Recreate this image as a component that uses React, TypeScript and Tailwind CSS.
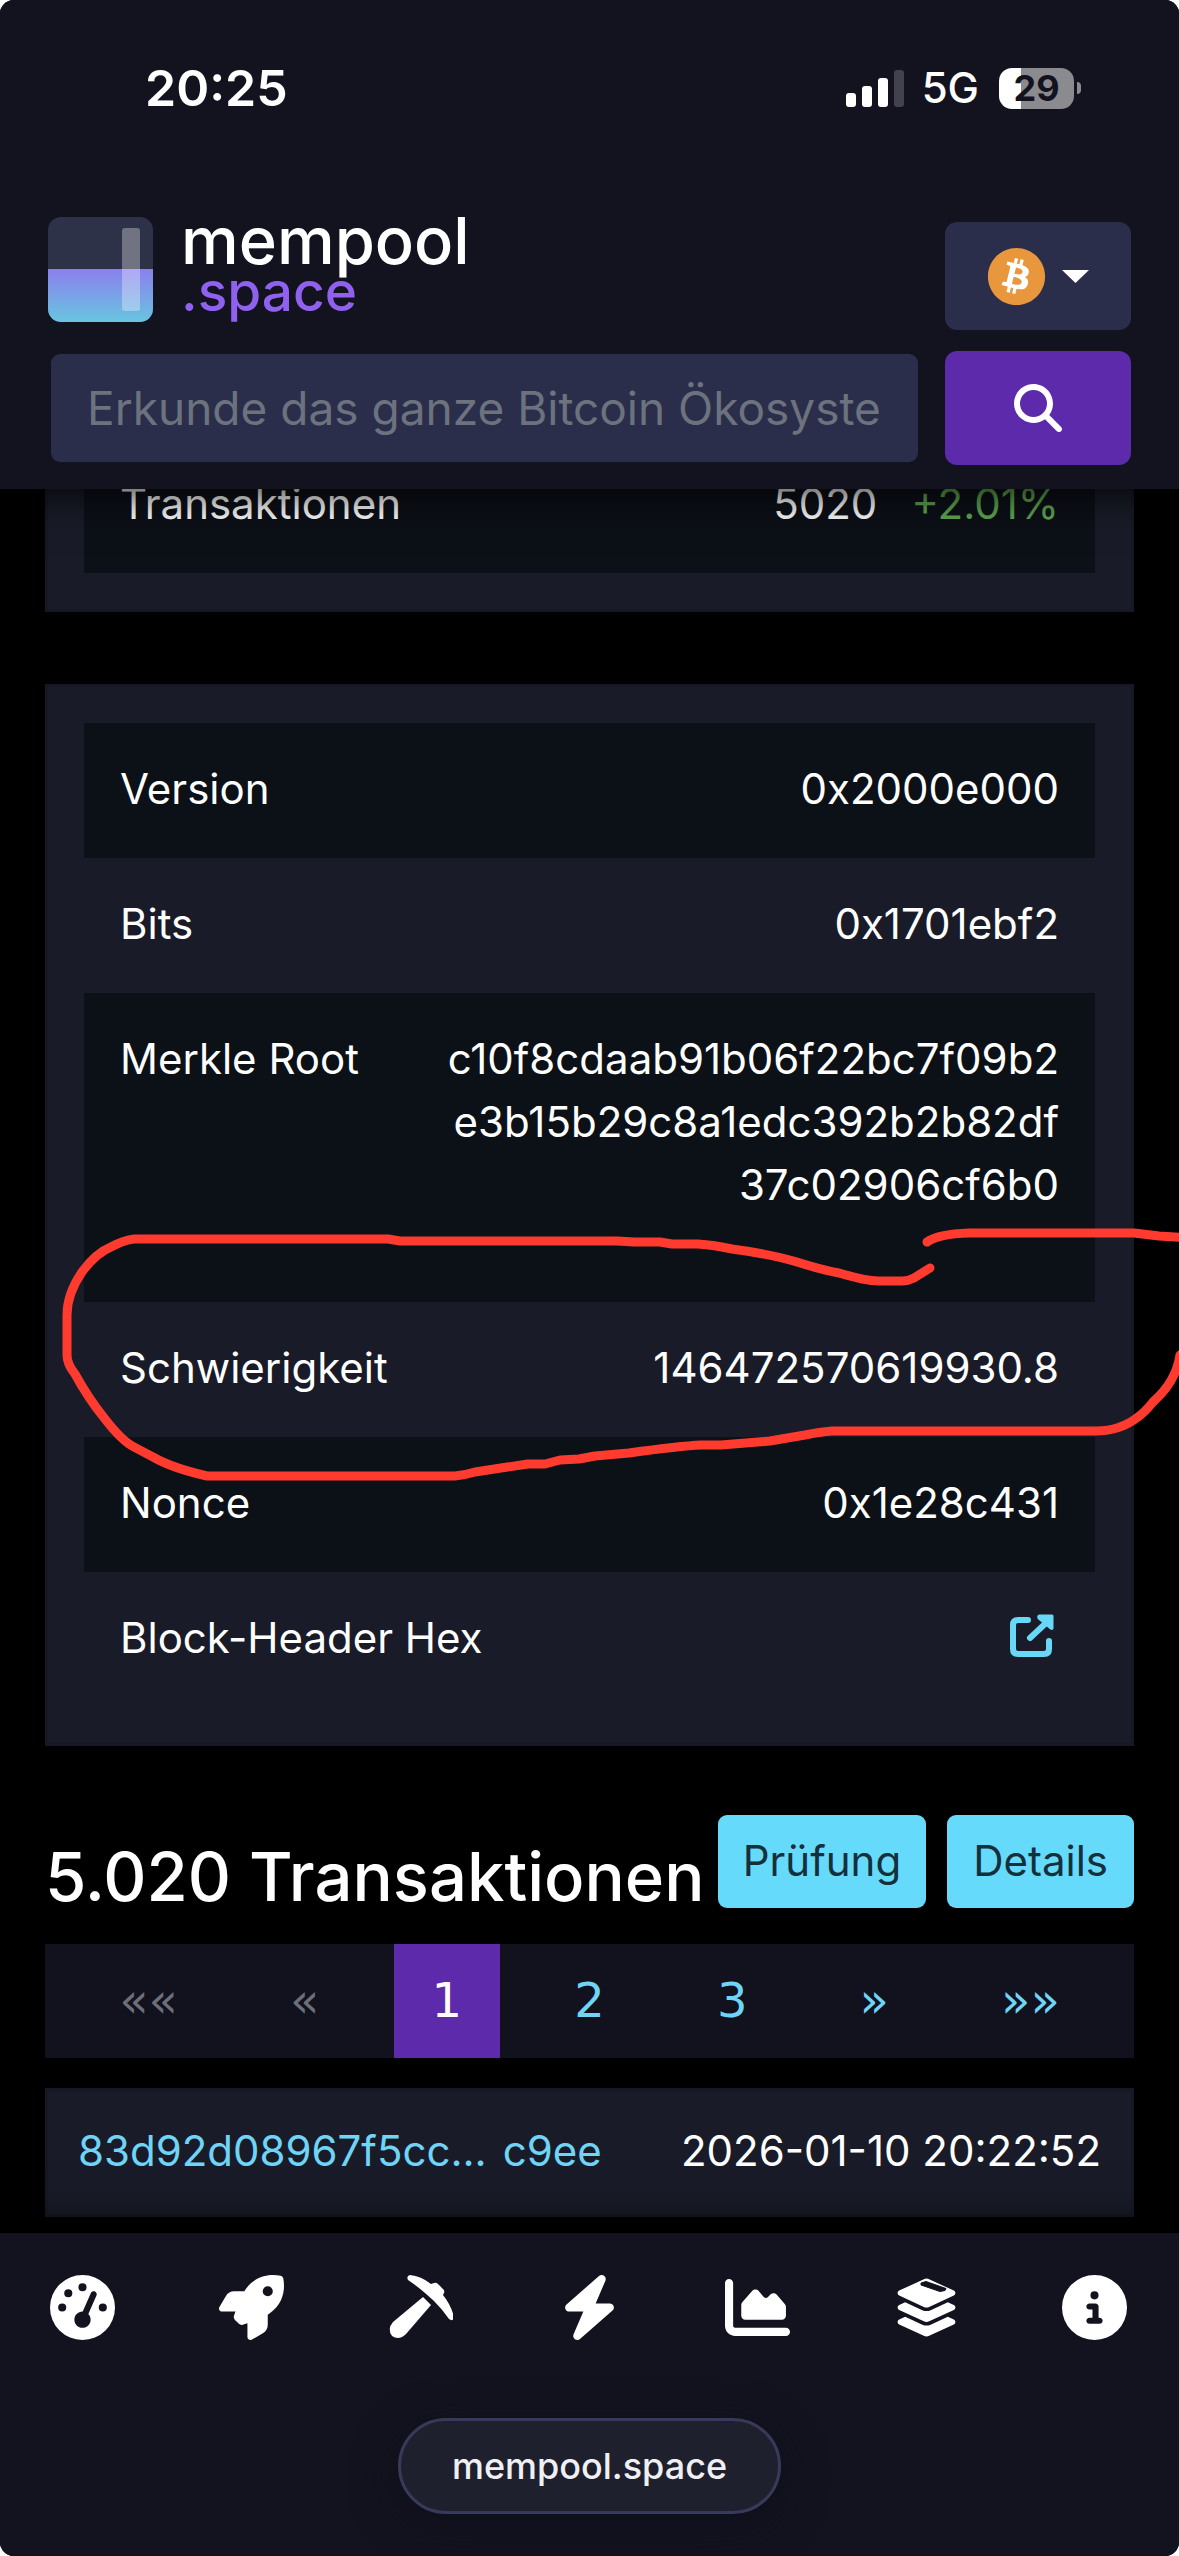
import type { ReactNode } from "react";
import {
  FaBitcoin,
  FaBolt,
  FaChartArea,
  FaCircleInfo,
  FaGaugeHigh,
  FaLayerGroup,
  FaMagnifyingGlass,
  FaRocket,
} from "react-icons/fa6";

function StatusBar() {
  return (
    <div className="flex h-[176px] items-center justify-between pr-[98px] pl-[145px]">
      <span className="text-[50px] leading-none font-semibold">20:25</span>
      <div className="flex items-center">
        <div className="flex h-[37px] items-end gap-1.5" aria-label="Signal">
          <span className="h-3.5 w-2.5 rounded-[3px] bg-white" />
          <span className="h-[21px] w-2.5 rounded-[3px] bg-white" />
          <span className="h-[29px] w-2.5 rounded-[3px] bg-white" />
          <span className="h-[37px] w-2.5 rounded-[3px] bg-[#42424c]" />
        </div>
        <span className="ml-[18px] text-[42px] leading-none font-medium">5G</span>
        <div className="ml-5 flex items-center gap-[3px]">
          <div className="flex h-[41px] w-[75px] items-center justify-center rounded-[13px] bg-linear-to-r from-white from-[29%] to-[#8a8a8f] to-[29%] text-[36px] leading-none font-bold text-[#12131e]">
            29
          </div>
          <span className="h-3 w-1 rounded-r-full bg-[#8a8a8f]" />
        </div>
      </div>
    </div>
  );
}

function LogoMark() {
  return (
    <svg className="size-[105px]" viewBox="0 0 105 105" aria-hidden="true">
      <defs>
        <linearGradient id="pool" x1="0" y1="0" x2="0" y2="1">
          <stop offset="0" stopColor="#8b7fee" />
          <stop offset="1" stopColor="#68c5e0" />
        </linearGradient>
        <clipPath id="tile">
          <rect width="105" height="105" rx="13" />
        </clipPath>
      </defs>
      <g clipPath="url(#tile)">
        <rect width="105" height="105" fill="#2e3248" />
        <rect y="52" width="105" height="53" fill="url(#pool)" />
        <rect x="74" y="11" width="18" height="83" rx="3" fill="#fff" fillOpacity="0.32" />
      </g>
    </svg>
  );
}

function Header() {
  return (
    <header className="relative z-10 bg-[#12131e] pb-6 shadow-[0_0_45px_0_#000]">
      <StatusBar />
      <div className="flex items-start justify-between px-12 pt-[41px]">
        <a href="#home" className="flex items-start gap-7">
          <LogoMark />
          <span className="flex flex-col font-medium">
            <span className="text-[65px] leading-[48px]">mempool</span>
            <span className="text-[55px] leading-[52px] text-[#9060ee]">.space</span>
          </span>
        </a>
        <button
          type="button"
          aria-label="Bitcoin"
          className="mt-[5px] flex h-[108px] w-[186px] items-center justify-center gap-4 rounded-xl bg-[#2b2e4b]"
        >
          <span className="rounded-full bg-[radial-gradient(#fff_60%,transparent_61%)]">
            <FaBitcoin className="size-[59px] text-[#e9973c]" />
          </span>
          <svg className="h-[13px] w-[27px]" viewBox="0 0 27 13" aria-hidden="true">
            <path d="M0 0H27L13.5 13Z" fill="#fff" />
          </svg>
        </button>
      </div>
      <form className="mt-[21px] flex items-center gap-[27px] pr-12 pl-[51px]">
        <input
          type="text"
          aria-label="Suche"
          placeholder="Erkunde das ganze Bitcoin Ökosystem"
          className="h-[108px] min-w-0 flex-1 rounded-[9px] bg-[#2b2e4b] px-9 text-[46px] placeholder:text-[#6c727e]"
        />
        <button
          type="button"
          aria-label="Suchen"
          className="flex h-[114px] w-[186px] items-center justify-center rounded-xl bg-[#5c2aaa]"
        >
          <FaMagnifyingGlass className="size-12" />
        </button>
      </form>
    </header>
  );
}

function Row({ label, children }: { label: string; children: ReactNode }) {
  return (
    <tr className="odd:bg-[#0c1017]">
      <th scope="row" className="w-1/3 pt-[34px] pb-[38px] pl-9 text-left align-top font-normal whitespace-nowrap">
        {label}
      </th>
      <td className="pt-[34px] pr-9 pb-[38px] text-right align-top">{children}</td>
    </tr>
  );
}

function Card({ children }: { children: ReactNode }) {
  return (
    <div className="border-[3px] border-[#161925] bg-[#191c28] p-9">
      <table className="w-full table-fixed border-collapse text-[42px] leading-[63px]">
        <tbody>{children}</tbody>
      </table>
    </div>
  );
}

function ExternalLinkIcon() {
  return (
    <svg className="inline h-[43px] w-11" viewBox="0 0 44 43" fill="none" aria-hidden="true">
      <path
        d="M18 6H8Q3 6 3 11V35Q3 40 8 40H34Q39 40 39 35V27"
        stroke="#68d8f7"
        strokeWidth="6"
        strokeLinecap="round"
      />
      <path d="M20 24L36 9" stroke="#68d8f7" strokeWidth="6" strokeLinecap="round" />
      <path
        d="M30 2H42V14Q42 15 41 14L29 4Q28 2 30 2Z"
        fill="#68d8f7"
        stroke="#68d8f7"
        strokeWidth="3"
        strokeLinejoin="round"
      />
    </svg>
  );
}

function Scribble() {
  return (
    <svg
      className="pointer-events-none absolute inset-x-0 top-[536px] w-full"
      viewBox="0 1220 1179 270"
      fill="none"
      stroke="#ff3b30"
      strokeWidth="9"
      strokeLinecap="round"
      strokeLinejoin="round"
      aria-hidden="true"
    >
      <path d="M930 1268L914 1278Q908 1281 902 1281H878Q866 1281 839 1273Q822 1270 797 1262Q770 1254 732 1249Q714 1245 698 1244H672L660 1242H634L617 1241H400L388 1239H134Q124 1240 111 1247Q96 1253 82 1272Q67 1294 67 1315V1355Q67 1364 75 1374Q88 1398 105 1419Q122 1441 134 1447L153 1457Q172 1468 207 1476H455Q465 1475 475 1472L501 1468L528 1464H545L560 1460L579 1459L595 1456L629 1453Q680 1446 701 1445H721L770 1441L805 1435Q820 1432 832 1431H1096Q1120 1431 1138 1417Q1145 1412 1153 1402Q1176 1382 1180 1355" />
      <path d="M927 1242Q938 1234 969 1233H1134L1159 1236L1190 1238" />
    </svg>
  );
}

function Transactions() {
  const pageItem = "flex h-[114px] items-center px-[38px] pb-[3px] text-[#6fd4f5]";
  return (
    <section className="px-[45px] pt-[69px] pb-4">
      <div className="flex items-start justify-between">
        <h2 className="mt-5 text-[67px] leading-[84px] font-medium whitespace-nowrap">5.020 Transaktionen</h2>
        <div className="flex gap-[21px] text-[42px] leading-[63px] text-[#15303a]">
          <button type="button" className="h-[93px] rounded-[9px] bg-[#65dafb] px-[25px] pb-[3px]">
            Prüfung
          </button>
          <button type="button" className="h-[93px] rounded-[9px] bg-[#65dafb] px-[26px] pb-[3px]">
            Details
          </button>
        </div>
      </div>
      <nav
        aria-label="Seiten"
        className="mt-[25px] flex justify-evenly bg-[#12121e] font-['DejaVu_Sans',sans-serif] text-[48px] leading-none"
      >
        <button type="button" disabled className="flex h-[114px] items-center px-[38px] pb-[3px] text-[#6c6e78]">
          ««
        </button>
        <button type="button" disabled className="flex h-[114px] items-center px-[38px] pb-[3px] text-[#6c6e78]">
          «
        </button>
        <a href="#page-1" aria-current="page" className="flex h-[114px] items-center bg-[#5c2aaa] px-[38px] pb-[3px]">
          1
        </a>
        <a href="#page-2" className={pageItem}>2</a>
        <a href="#page-3" className={pageItem}>3</a>
        <a href="#next" className={pageItem}>»</a>
        <a href="#last" className={pageItem}>»»</a>
      </nav>
      <div className="mt-[30px] flex justify-between border-[3px] border-[#161925] bg-[#191c28] px-[30px] pt-7 pb-8 text-[42px] leading-[63px]">
        <a href="#tx" className="flex gap-4 text-[#6fd4f5]">
          <span>83d92d08967f5cc...</span>
          <span>c9ee</span>
        </a>
        <time>2026-01-10 20:22:52</time>
      </div>
    </section>
  );
}

function PickIcon() {
  return (
    <svg className="size-[66px]" viewBox="-2 0 66 66" fill="#fff" aria-hidden="true">
      <path d="M34 22L42 30L17 59Q10 66 3 61Q-2 54 4 47Z" />
      <path d="M21 0Q32 1 42 9L45 8Q47 7 49 9L54 14Q56 16 55 18L54 20Q62 30 65 42Q64 47 60 44Q53 34 45 26L36 18Q28 11 19 5Q17 1 21 0Z" />
    </svg>
  );
}

function StackIcon() {
  return (
    <span className="relative">
      <FaLayerGroup className="size-[65px]" />
      <svg className="absolute inset-0 size-full" viewBox="0 0 65 65" aria-hidden="true">
        <path d="M27 8L32 6.5L52 13.5L51 15.5L46 16.5L27 10Z" fill="#12131e" stroke="#12131e" strokeLinejoin="round" />
      </svg>
    </span>
  );
}

function Footer() {
  const items = [
    { label: "Dashboard", icon: <FaGaugeHigh className="size-[65px]" /> },
    { label: "Beschleuniger", icon: <FaRocket className="size-[65px]" /> },
    { label: "Mining", icon: <PickIcon /> },
    { label: "Lightning", icon: <FaBolt className="size-[65px]" /> },
    { label: "Grafiken", icon: <FaChartArea className="size-[65px]" /> },
    { label: "Dokumentation", icon: <StackIcon /> },
    { label: "Info", icon: <FaCircleInfo className="size-[65px]" /> },
  ];
  return (
    <footer className="relative flex-1 bg-[#12131e] pt-[42px] pb-[42px] shadow-[0_0_45px_0_#000]">
      <nav aria-label="Hauptmenü" className="flex justify-between pr-[52px] pl-[50px]">
        {items.map((item) => (
          <a key={item.label} href="#menu" aria-label={item.label}>
            {item.icon}
          </a>
        ))}
      </nav>
      <div className="mt-[77px] flex justify-center">
        <button
          type="button"
          className="h-24 rounded-full border-[3px] border-[#39395a] bg-[#1f202d] px-[51px] text-[36px] font-medium text-[#f0f0f4] shadow-[0_12px_45px_0_#0e101b]"
        >
          mempool.space
        </button>
      </div>
    </footer>
  );
}

export default function App() {
  return (
    <div className="bg-white">
      <div className="flex min-h-screen flex-col overflow-hidden rounded-[14px] bg-black font-['Inter',sans-serif] text-white">
        <Header />
        <main>
          <section className="-mt-[90px] px-[45px]">
            <Card>
              <Row label="Transaktionen">
                5020 <span className="ml-[22px] text-[#5fa850]">+2.01%</span>
              </Row>
            </Card>
          </section>
          <section className="relative mt-[72px] px-[45px]">
            <Card>
              <Row label="Version">0x2000e000</Row>
              <Row label="Bits">0x1701ebf2</Row>
              <Row label="Merkle Root">
                <p className="mb-12">
                  c10f8cdaab91b06f22bc7f09b2
                  <br />
                  e3b15b29c8a1edc392b2b82df
                  <br />
                  37c02906cf6b0
                </p>
              </Row>
              <Row label="Schwierigkeit">146472570619930.8</Row>
              <Row label="Nonce">0x1e28c431</Row>
              <Row label="Block-Header Hex">
                <a href="#header-hex" aria-label="Block-Header Hex öffnen" className="flex justify-end pt-2 pr-[5px] pb-3">
                  <ExternalLinkIcon />
                </a>
              </Row>
            </Card>
            <Scribble />
          </section>
          <Transactions />
        </main>
        <Footer />
      </div>
    </div>
  );
}
